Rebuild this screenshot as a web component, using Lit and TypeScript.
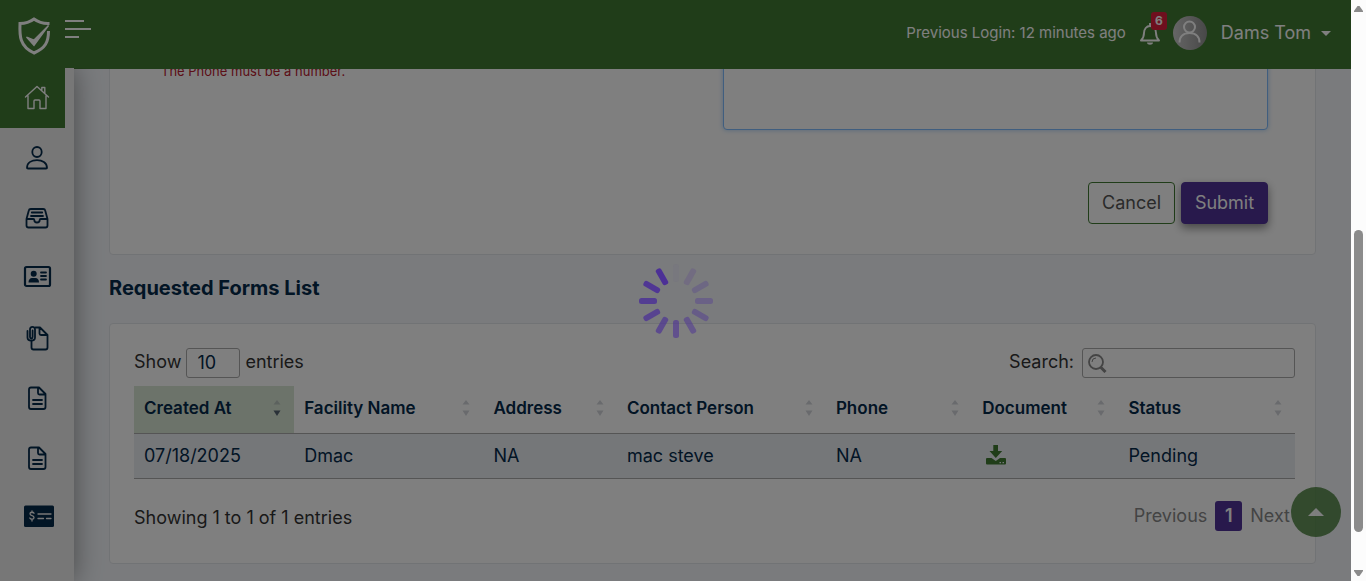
import { LitElement, html, css, svg } from "lit";
import { customElement, property, state } from "lit/decorators.js";
import { classMap } from "lit/directives/class-map.js";

const navIcons: Record<string, unknown> = {
  home: svg`<path d="M2.500 13 14 2.500 25.500 13M5 11.500v13h6V17q0-1 1-1h4q1 0 1 1v7.500h6v-13M18.800 6.500V3.500h3v6"/>`,
  person: svg`<ellipse cx="14" cy="8" rx="4.700" ry="5"/><path d="M4 24c0-5.500 5-7.800 10-7.800s10 2.300 10 7.800c0 .5-.5.500-1 .500H5c-.5 0-1 0-1-.5z"/>`,
  inbox: svg`<path d="M3.500 15 5.800 6.500q.3-1.500 2-1.500h12.400q1.700 0 2 1.500L24.500 15v6.500q0 2-2 2h-17q-2 0-2-2V15h6.800q1 0 1 1 0 2.500 2.700 2.500t2.700-2.500q0-1 1-1h6.800M8.800 8.500h10.400M8 12h12"/>`,
  card: svg`<rect x="2" y="3" width="25" height="19" rx="1.500" stroke-width="2.200"/><g class="solid"><circle cx="10.700" cy="9.700" r="3"/><path d="M5.500 18.500c0-3 1.500-4.500 3.500-4.500h3.500c2 0 3.500 1.500 3.500 4.500z"/></g><path d="M18 8.500h5M18 12h5M18 15.500h5"/>`,
  attach: svg`<path d="M12.500 3.500H17l7.500 7.500v12.500q0 2-2 2H10.500q-2 0-2-2V17M16.500 4v5.500q0 1.500 1.500 1.500h6"/><path d="M4.500 7v6.500c0 4 7.500 4 7.500 0V5.500c0-3.500-5-3.500-5 0V13c0 1.800 2.600 1.800 2.600 0V6.500"/>`,
  file: svg`<path d="M8 3.500h8l6.500 6.500v13q0 2-2 2H8q-2 0-2-2V5.500q0-2 2-2zM15 3.500V9q0 1.500 1.500 1.500h6M10 16h9M10 20h9"/>`,
  cheque: svg`<rect class="solid" x="1" y="1.500" width="30" height="21.500" rx="1.500"/><g class="light"><path d="M11 9.300c-.5-1.400-4-1.600-4 .5 0 2.400 4 1.200 4 3.700 0 2.200-3.500 2-4.200.5M9 7v1.500M9 15.500V17M15 10h13M15 14.500h5.500M23.500 14.500H28"/></g>`,
};

@customElement("nav-rail")
export class NavRail extends LitElement {
  static styles = css`
    :host { display: block; width: 74px; background: #eee; box-shadow: 0 0 28px rgba(0, 0, 0, 0.42); }
    .list { list-style: none; margin: 0; padding: 0; width: 65px; }
    .link { display: grid; place-items: center; height: 60px; padding-left: 8px; color: #052a4b; }
    .link.active { background: #417b33; color: #fff; }
    svg { width: 28px; height: 28px; fill: none; stroke: currentColor; stroke-width: 1.800; overflow: visible; stroke-linejoin: round; stroke-linecap: round; }
    .link.active svg { stroke-width: 1.400; }
    .solid { fill: currentColor; stroke: none; }
    .light { stroke: #eee; stroke-width: 1.300; }
  `;
  @property() active = "Home";
  private items = [
    ["Home", "home"], ["Profile", "person"], ["Inbox", "inbox"], ["ID card", "card"],
    ["Attachments", "attach"], ["Documents", "file"], ["Forms", "file"], ["Payments", "cheque"],
  ];
  render() {
    return html`<nav><ul class="list">
      ${this.items.map(([label, icon]) => html`<li>
        <a href="#" aria-label=${label} class=${classMap({ link: true, active: label === this.active })}>
          <svg viewBox="0 0 28 28" aria-hidden="true">${navIcons[icon]}</svg>
        </a></li>`)}
    </ul></nav>`;
  }
}

@customElement("top-bar")
export class TopBar extends LitElement {
  static styles = css`
    :host { display: flex; align-items: flex-start; justify-content: space-between; height: 68px; box-sizing: border-box; padding: 16px 20px 0 16px; background: #417b33; color: #fff; font-family: Inter, sans-serif; }
    .side { display: flex; align-items: center; }
    .start { gap: 13px; }
    .plain { border: 0; padding: 0; background: none; color: inherit; font: inherit; display: flex; align-items: center; }
    .menu { align-self: flex-start; padding-top: 4px; }
    .login { font-size: 15px; line-height: 34px; margin-right: 14px; }
    .bell { position: relative; margin-right: 13px; padding-top: 2px; }
    .badge { position: absolute; left: 11px; top: -8px; width: 16px; height: 18px; border-radius: 3px; background: #dc1f3c; font-size: 12px; font-weight: 700; line-height: 17px; text-align: center; }
    .avatar { margin-right: 14px; }
    .user { font-size: 18px; line-height: 32px; gap: 10px; }
    svg { display: block; }
  `;
  render() {
    return html`
      <div class="side start">
        <svg width="36" height="40" viewBox="0 0 36 40" fill="none" stroke="#fff" stroke-width="3" role="img" aria-label="Shield">
          <path d="M32 9V7.500C25.500 7.500 22 6 18 3 14 6 10 7.500 4 7.500c-.5 12-.5 23 14 29.500 11.500-5 14.500-11 14.500-22"/>
          <path d="m10.500 21 7.500 8.500L32.500 9.500 18 24z" fill="#fff" stroke-width="1.300"/>
        </svg>
        <button class="plain menu" aria-label="Toggle menu">
          <svg width="26" height="18" stroke="#fff" stroke-width="2"><path d="M0 1h19M0 9h26M0 17h14"/></svg>
        </button>
      </div>
      <div class="side">
        <span class="login">Previous Login: 12 minutes ago</span>
        <button class="plain bell" aria-label="Notifications">
          <svg width="20" height="24" viewBox="0 0 20 24" fill="none" stroke="#fff" stroke-width="1.900">
            <path d="M10 1v3M1 18.500h18c-2-2-3-3.500-3-7.500 0-4-2.500-7-6-7s-6 3-6 7c0 4-1 5.500-3 7.500z" stroke-linejoin="round"/><path d="M7 20.500h6c0 3-6 3-6 0z" fill="#fff" stroke="none"/>
          </svg>
          <span class="badge">6</span>
        </button>
        <svg class="avatar" width="34" height="34" viewBox="0 0 34 34" fill="none" stroke="#fff" stroke-width="2" role="img" aria-label="Avatar">
          <defs><linearGradient id="g"><stop stop-color="#ccc"/><stop offset="1" stop-color="#909090"/></linearGradient></defs>
          <circle cx="17" cy="17" r="17" fill="url(#g)" stroke="none"/>
          <circle cx="16.500" cy="11" r="5.500"/><path d="M6.500 26.500c0-6 4-9.500 10-9.500s10 3.500 10 9.500"/>
        </svg>
        <button class="plain user">Dams Tom
          <svg width="10" height="5" fill="#fff"><path d="M0 0h10L5 5z"/></svg>
        </button>
      </div>`;
  }
}

@customElement("loading-wheel")
export class LoadingWheel extends LitElement {
  static styles = css`:host { display: block; } svg { display: block; }`;
  render() {
    return html`<svg width="74" height="74" viewBox="-37 -37 74 74" fill="#4b2f97" role="img" aria-label="Loading">
      ${Array.from({ length: 12 }, (_, i) => svg`<rect x="-3" y="-37" width="6" height="18" rx="2.500" transform=${`rotate(${i * 30})`} opacity=${i === 0 ? 0.04 : 0.1 + i * 0.08}/>`)}
    </svg>`;
  }
}

interface Row { created: string; facility: string; address: string; contact: string; phone: string; status: string; }

@customElement("forms-table")
export class FormsTable extends LitElement {
  static styles = css`
    :host { display: block; font-size: 18px; color: #333; }
    .bar { display: flex; justify-content: space-between; align-items: flex-start; }
    .field { display: flex; align-items: flex-start; line-height: 28px; gap: 5px; }
    .search { gap: 8px; }
    .length { appearance: none; width: 54px; height: 30px; box-sizing: border-box; border: 1px solid #aaa; border-radius: 3px; padding: 0 10px; background: transparent; color: #052a4b; font: inherit; }
    .box { display: flex; align-items: center; box-sizing: border-box; width: 213px; height: 30px; border: 1px solid #aaa; border-radius: 3px; padding-left: 5px; }
    .input { flex: 1; min-width: 0; border: 0; outline: 0; background: none; font: inherit; }
    .table { width: 100%; table-layout: fixed; border-collapse: separate; border-spacing: 0; margin-top: 8px; color: #052a4b; }
    .c1 { width: 13.800%; } .c2 { width: 16.300%; } .c3 { width: 11.500%; } .c4 { width: 18%; } .c5, .c6 { width: 12.600%; }
    .head { padding: 0; text-align: left; border-bottom: 1px solid #aaa; }
    .head.sorted { background: #d9e6d5; }
    .sort { display: flex; align-items: center; justify-content: space-between; width: 100%; height: 47px; box-sizing: border-box; padding: 0 13px 4px 10px; border: 0; background: none; color: inherit; font: inherit; font-size: 17px; font-weight: 600; white-space: nowrap; }
    .cell { padding: 0 10px 2px; height: 42px; background: #ebeef2; border-bottom: 1px solid #aaa; }
    .get { display: block; margin-left: 4px; width: 20px; }
    .foot { display: flex; justify-content: space-between; align-items: flex-start; margin-top: 22px; }
    .info { line-height: 34px; }
    .pages { display: flex; gap: 8px; padding-right: 5px; }
    .page { border: 0; padding: 0; background: none; color: #888; font: inherit; line-height: 30px; }
    .page.current { width: 27px; border-radius: 3px; background: #503299; color: #fff; font-weight: 600; }
    svg { display: block; }
  `;
  @state() private sorted = "Created At";
  private heads = ["Created At", "Facility Name", "Address", "Contact Person", "Phone", "Document", "Status"];
  private rows: Row[] = [{ created: "07/18/2025", facility: "Dmac", address: "NA", contact: "mac steve", phone: "NA", status: "Pending" }];

  render() {
    return html`
      <div class="bar">
        <div class="field"><label for="length">Show</label>
          <select id="length" class="length"><option>10</option></select><span>entries</span></div>
        <div class="field search"><label for="search">Search:</label>
          <span class="box">
            <svg width="19" height="19" viewBox="0 0 19 19" fill="none" stroke="#888" aria-hidden="true"><circle cx="8" cy="8" r="7" stroke-width="1.800"/><path d="m12.500 13 5 5" stroke-width="3"/><path d="M4 8q0-4 4-4"/></svg>
            <input id="search" class="input" type="search"></span></div>
      </div>
      <table class="table">
        <colgroup>${this.heads.map((_, i) => html`<col class=${`c${i + 1}`}>`)}</colgroup>
        <thead><tr>${this.heads.map((h) => {
          const on = h === this.sorted;
          return html`<th class=${classMap({ head: true, sorted: on })}><button class="sort" @click=${() => (this.sorted = h)}>${h}
            <svg width="8" height="16" viewBox="0 0 8 16" aria-hidden="true"><path d="M4 0l3.500 4.500h-7z" fill=${on ? "#b9c4bd" : "#d2d5da"}/><path d="M4 16 .5 10.500h7z" fill=${on ? "#556270" : "#d2d5da"}/></svg>
          </button></th>`;
        })}</tr></thead>
        <tbody>${this.rows.map((r) => html`<tr>
          <td class="cell">${r.created}</td><td class="cell">${r.facility}</td><td class="cell">${r.address}</td>
          <td class="cell">${r.contact}</td><td class="cell">${r.phone}</td>
          <td class="cell"><a class="get" href="#" aria-label="Download">
            <svg width="20" height="20" viewBox="0 0 20 20" fill="#417b33"><path d="M7.300 0h4.700v6h4.200L9.800 13 3.500 6h3.800z"/><path fill-rule="evenodd" d="M1 13h4.500l4.300 3 4.200-3H19q1 0 1 1v4.500q0 1-1 1H1q-1 0-1-1V14q0-1 1-1zm12.500 4v1.200h1.500V17zm3 0v1.200H18V17z"/></svg></a></td>
          <td class="cell">${r.status}</td></tr>`)}</tbody>
      </table>
      <div class="foot"><span class="info">Showing 1 to 1 of 1 entries</span>
        <div class="pages"><button class="page">Previous</button><button class="page current">1</button><button class="page">Next</button></div>
      </div>`;
  }
}

@customElement("app-root")
export class AppRoot extends LitElement {
  static styles = css`
    :host { display: grid; grid-template-columns: minmax(0, 1fr) 15px; height: 100vh; overflow: hidden; font-family: Inter, sans-serif; }
    .app { position: relative; display: flex; flex-direction: column; min-height: 0; background: #f4f7fb; }
    .body { flex: 1; display: flex; min-height: 0; overflow: hidden; }
    .main { flex: 1; min-width: 0; display: flex; flex-direction: column; justify-content: flex-end; padding: 0 35px 17px; overflow: hidden; border-top: 1px solid #417b33; }
    nav-rail { position: relative; flex: none; }
    .panel { flex: none; border: 1px solid #e3e6ea; border-radius: 4px; background: #fff; }
    .request { padding: 20px 47px 30px; }
    .fields { display: grid; grid-template-columns: 1fr 1fr; gap: 20px; }
    .error { align-self: end; margin: 0 0 51px 4px; font-size: 13px; line-height: 16px; color: #b8202f; }
    .area { display: block; width: 100%; height: 140px; box-sizing: border-box; resize: none; border: 1px solid #80bdff; border-radius: 4px; background: #fff; box-shadow: 0 0 5px rgba(80, 160, 240, 0.5); outline: 0; }
    .actions { display: flex; justify-content: flex-end; gap: 6px; margin-top: 52px; }
    .btn { height: 42px; width: 87px; padding: 0 0 2px; border-radius: 4px; border: 1px solid #417b33; background: #fff; color: #555; font: inherit; font-size: 18px; }
    .primary { border-color: #503299; background: #503299; color: #fff; box-shadow: 0 4px 10px rgba(0, 0, 0, 0.45); }
    .title { margin: 20px 0 22px; font-size: 20px; line-height: 26px; font-weight: 700; color: #052a4b; }
    .listing { padding: 24px 20px 28px 24px; }
    .top { position: absolute; right: 10px; bottom: 44px; width: 50px; height: 50px; display: grid; place-items: center; padding: 0; border: 0; border-radius: 50%; background: #417b33; opacity: 0.8; }
    .veil { position: absolute; inset: 0; background: rgba(0, 0, 0, 0.5); display: grid; place-items: center; }
    .wheel { margin-top: 20px; }
    .scroll { display: flex; flex-direction: column; align-items: center; justify-content: space-between; padding: 5px 0 4px; background: #fcfcfc; }
    .track { flex: 1; width: 9px; display: flex; flex-direction: column; }
    .before { flex: 218; }
    .thumb { flex: 301; border-radius: 5px; background: #8b8b8b; }
    .after { flex: 38; }
  `;
  render() {
    return html`
      <div class="app">
        <top-bar></top-bar>
        <div class="body">
          <nav-rail></nav-rail>
          <main class="main">
            <form class="panel request">
              <div class="fields"><p class="error">The Phone must be a number.</p><textarea class="area" aria-label="Comments"></textarea></div>
              <div class="actions"><button type="button" class="btn">Cancel</button><button type="button" class="btn primary">Submit</button></div>
            </form>
            <h2 class="title">Requested Forms List</h2>
            <section class="panel listing"><forms-table></forms-table></section>
          </main>
        </div>
        <button class="top" aria-label="Back to top"><svg width="16" height="8" fill="#fff"><path d="M8 0l8 8H0z"/></svg></button>
        <div class="veil"><loading-wheel class="wheel"></loading-wheel></div>
      </div>
      <div class="scroll" aria-hidden="true">
        <svg width="9" height="7" fill="#8b8b8b"><path d="M0 7V6l3.500-5h2L9 6v1z"/></svg>
        <div class="track"><span class="before"></span><span class="thumb"></span><span class="after"></span></div>
        <svg width="9" height="7" fill="#8b8b8b"><path d="M0 0v1l3.500 5h2L9 1V0z"/></svg>
      </div>`;
  }
}
